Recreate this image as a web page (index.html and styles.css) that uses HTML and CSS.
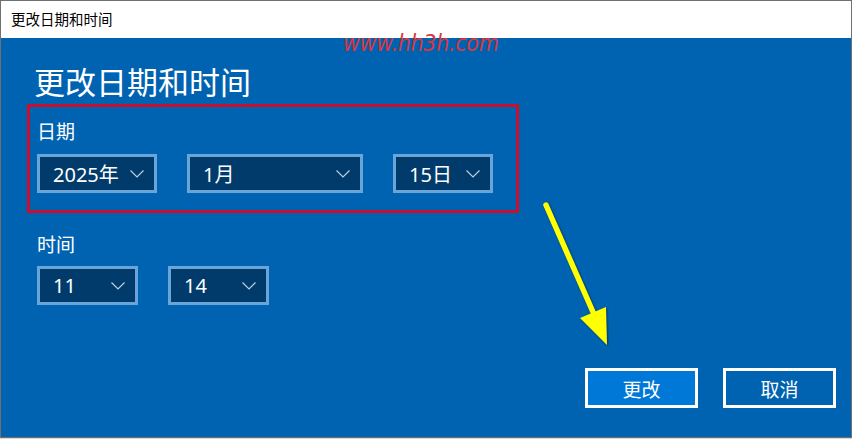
FILE: index.html
```html
<!DOCTYPE html>
<html lang="zh-CN">
<head>
<meta charset="UTF-8" />
<meta name="viewport" content="width=device-width, initial-scale=1" />
<title>更改日期和时间</title>
<link rel="stylesheet" href="styles.css">
</head>
<body>

<div class="window">
  <div class="titlebar">更改日期和时间</div>

  <div class="content">
    <h1>更改日期和时间</h1>

    <div class="group">
      <div class="label label-date">日期</div>
      <div class="row">
        <div class="combo combo-year">
          <span>2025年</span>
          <svg class="chev" viewBox="0 0 14 8"><polyline points="0.5,0.5 7,7 13.5,0.5" /></svg>
        </div>
        <div class="combo combo-month">
          <span>1月</span>
          <svg class="chev" viewBox="0 0 14 8"><polyline points="0.5,0.5 7,7 13.5,0.5" /></svg>
        </div>
        <div class="combo combo-day">
          <span>15日</span>
          <svg class="chev" viewBox="0 0 14 8"><polyline points="0.5,0.5 7,7 13.5,0.5" /></svg>
        </div>
      </div>
    </div>

    <div class="group">
      <div class="label label-time">时间</div>
      <div class="row">
        <div class="combo combo-small">
          <span>11</span>
          <svg class="chev" viewBox="0 0 14 8"><polyline points="0.5,0.5 7,7 13.5,0.5" /></svg>
        </div>
        <div class="combo combo-small">
          <span>14</span>
          <svg class="chev" viewBox="0 0 14 8"><polyline points="0.5,0.5 7,7 13.5,0.5" /></svg>
        </div>
      </div>
    </div>

    <div class="actions">
      <button class="btn btn-primary">更改</button>
      <button class="btn">取消</button>
    </div>
  </div>

  <!-- annotations drawn on top of the dialog -->
  <span class="watermark">www.hh3h.com</span>
  <div class="mark"></div>
  <svg class="arrow" viewBox="0 0 90 165">
    <line x1="16" y1="15" x2="63" y2="122" />
    <polygon points="50,128 76,117 77,155" />
  </svg>
</div>

<div class="below"></div>

</body>
</html>
```

FILE: styles.css
```css
* { box-sizing: border-box; }

html, body {
  margin: 0; padding: 0;
  background: #e6e6e6;
  overflow: hidden;
  font-family: "Noto Sans", "Noto Sans CJK SC", sans-serif;
}

.window {
  position: relative;
  width: 852px;
  height: 438px;
  border: 1px solid #707070;
  background: #fff;
  display: flex;
  flex-direction: column;
}

.titlebar {
  height: 37px;
  padding-left: 10px;
  font-size: 14.5px;
  line-height: 37px;
  color: #000;
  background: #fff;
}

.content {
  flex: 1;
  background: #0063b1;
  color: #fff;
  display: flex;
  flex-direction: column;
  padding: 0 15px 29px 36px;
}

h1 {
  margin: 29px 0 0 -3px;
  font-size: 31px;
  line-height: 30px;
  font-weight: 400;
}

.label {
  font-size: 19px;
  line-height: 18px;
}
.label-date { margin-top: 26px; margin-bottom: 13px; }
.label-time { margin-top: 43px; margin-bottom: 12px; }

.row {
  display: flex;
  gap: 30px;
}

.combo {
  height: 39px;
  border: 3px solid #69a5d8;
  background: #003b6b;
  display: flex;
  align-items: center;
  justify-content: space-between;
  padding: 0 10px 0 13px;
  font-size: 20px;
}
.combo-year { width: 120px; }
.combo-month { width: 176px; }
.combo-day { width: 100px; }
.combo-small { width: 101px; }

.chev {
  width: 14px;
  height: 8px;
  fill: none;
  stroke: #b9cfe4;
  stroke-width: 1.2;
}

.actions {
  margin-top: auto;
  display: flex;
  justify-content: flex-end;
  gap: 25px;
}

.btn {
  width: 113px;
  height: 40px;
  border: 3px solid #fff;
  background: transparent;
  color: #fff;
  font-family: "Noto Sans CJK SC", sans-serif;
  font-size: 19px;
  padding: 0;
}
.btn-primary { background: #0078d7; }

.watermark {
  position: absolute;
  left: 342px;
  top: 31px;
  font-family: "DejaVu Sans", sans-serif;
  font-stretch: condensed;
  font-style: italic;
  font-size: 23px;
  line-height: 22px;
  letter-spacing: -0.3px;
  color: #d9363e;
}

.mark {
  position: absolute;
  left: 26px;
  top: 103px;
  width: 492px;
  height: 109px;
  border: 3px solid #c8102e;
}

.arrow {
  position: absolute;
  left: 529px;
  top: 189px;
  width: 90px;
  height: 165px;
  filter: drop-shadow(1px 1px 1px rgba(0,0,0,0.45));
}
.arrow line {
  stroke: #ffff00;
  stroke-width: 5.5;
  stroke-linecap: round;
}
.arrow polygon { fill: #ffff00; }

.below {
  height: 1px;
  background: #d8d8d8;
}
```
